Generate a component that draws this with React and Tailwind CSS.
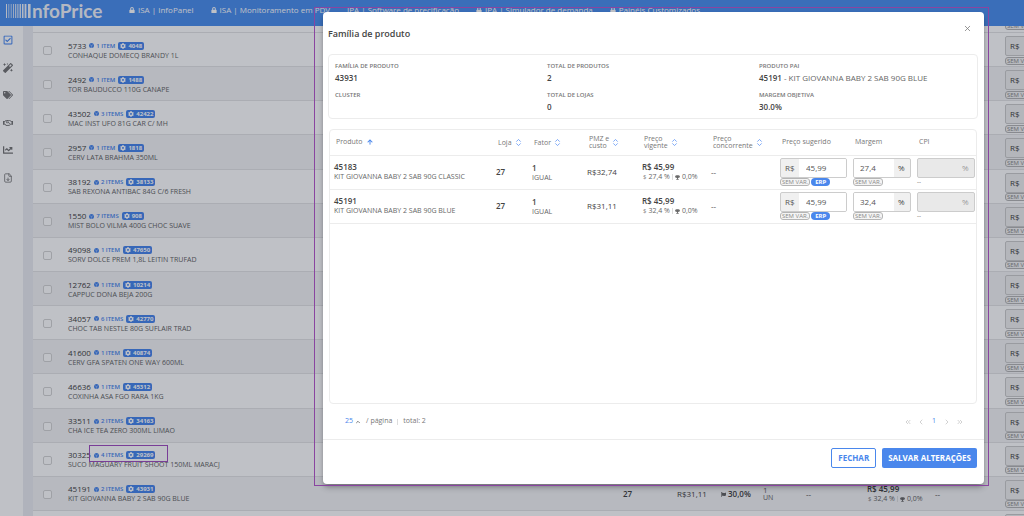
import { ChevronLeft, ChevronRight, ChevronsLeft, ChevronsRight, ChevronUp, FileDown, X } from 'lucide-react';
import {
    FaArrowUp,
    FaChartLine,
    FaCog,
    FaFlag,
    FaLock,
    FaMagic,
    FaRegCheckSquare,
    FaRegHandshake,
    FaTags,
    FaTrophy,
} from 'react-icons/fa';

const navItems = [
    { label: 'ISA | InfoPanel', locked: true },
    { label: 'ISA | Monitoramento em PDV', locked: true },
    { label: 'IPA | Software de precificação', locked: false },
    { label: 'IPA | Simulador de demanda', locked: true },
    { label: 'Painéis Customizados', locked: true },
];

const menuItems = [
    { label: 'Aprovação', icon: FaRegCheckSquare, active: true },
    { label: 'Regras', icon: FaMagic },
    { label: 'Etiquetas', icon: FaTags },
    { label: 'Negociações', icon: FaRegHandshake },
    { label: 'Relatórios', icon: FaChartLine },
    { label: 'Exportações', icon: FileDown },
];

const products = [
    { id: '5733', name: 'CONHAQUE DOMECQ BRANDY 1L', items: '1 ITEM', family: '4048' },
    { id: '2492', name: 'TOR BAUDUCCO 110G CANAPE', items: '1 ITEM', family: '1488' },
    { id: '43502', name: 'MAC INST UFO 81G CAR C/ MH', items: '3 ITEMS', family: '42422' },
    { id: '2957', name: 'CERV LATA BRAHMA 350ML', items: '1 ITEM', family: '1818' },
    { id: '38192', name: 'SAB REXONA ANTIBAC 84G C/6 FRESH', items: '2 ITEMS', family: '38133' },
    { id: '1550', name: 'MIST BOLO VILMA 400G CHOC SUAVE', items: '7 ITEMS', family: '908' },
    { id: '49098', name: 'SORV DOLCE PREM 1,8L LEITIN TRUFAD', items: '1 ITEM', family: '47650' },
    { id: '12762', name: 'CAPPUC DONA BEJA 200G', items: '1 ITEM', family: '10214' },
    { id: '34057', name: 'CHOC TAB NESTLE 80G SUFLAIR TRAD', items: '6 ITEMS', family: '42770' },
    { id: '41600', name: 'CERV GFA SPATEN ONE WAY 600ML', items: '1 ITEM', family: '40874' },
    { id: '46636', name: 'COXINHA ASA FGO RARA 1KG', items: '1 ITEM', family: '45312' },
    { id: '33511', name: 'CHA ICE TEA ZERO 300ML LIMAO', items: '2 ITEMS', family: '34163' },
    { id: '30325', name: 'SUCO MAGUARY FRUIT SHOOT 150ML MARACJ', items: '4 ITEMS', family: '29269', marked: true },
    {
        id: '45191',
        name: 'KIT GIOVANNA BABY 2 SAB 90G BLUE',
        items: '2 ITEMS',
        family: '43931',
        store: '27',
        cost: 'R$31,11',
        target: '30,0%',
        price: 'R$ 45,99',
        margin: '32,4 %',
    },
];

const familyInfo = [
    { label: 'FAMÍLIA DE PRODUTO', value: '43931' },
    { label: 'TOTAL DE PRODUTOS', value: '2' },
    { label: 'PRODUTO PAI', value: '45191', detail: 'KIT GIOVANNA BABY 2 SAB 90G BLUE' },
    { label: 'CLUSTER', value: '' },
    { label: 'TOTAL DE LOJAS', value: '0' },
    { label: 'MARGEM OBJETIVA', value: '30.0%' },
];

const familyProducts = [
    { id: '45183', name: 'KIT GIOVANNA BABY 2 SAB 90G CLASSIC', cost: 'R$32,74', margin: '27,4 %', suggestedMargin: '27,4' },
    { id: '45191', name: 'KIT GIOVANNA BABY 2 SAB 90G BLUE', cost: 'R$31,11', margin: '32,4 %', suggestedMargin: '32,4' },
];

const Logo = () => (
    <a href="#" aria-label="InfoPrice" className="flex w-[98px] items-center gap-px pl-[6px] text-[#f0f3f9]">
        <svg viewBox="0 0 25 14" className="h-[14px] w-[25px] shrink-0" fill="currentColor" aria-hidden="true">
            <rect x="0" y="0" width="1" height="14" />
            <rect x="2.5" y="0" width="0.7" height="14" />
            <rect x="4.8" y="0" width="0.7" height="14" />
            <rect x="7" y="0" width="0.8" height="14" />
            <rect x="9.2" y="0" width="1" height="14" />
            <rect x="11.4" y="0" width="1" height="14" />
            <rect x="13.6" y="0" width="1.3" height="14" />
            <rect x="16" y="0" width="1.5" height="14" />
            <rect x="18.6" y="0" width="1.8" height="14" />
            <rect x="22" y="0" width="2.6" height="14" />
        </svg>
        <span className="font-['Lato',sans-serif] text-[19px] leading-[14px] font-bold">nfoPrice</span>
    </a>
);

const BallIcon = () => (
    <svg viewBox="0 0 10 10" className="size-[5px] shrink-0" aria-hidden="true">
        <circle cx="5" cy="5" r="5" fill="#4a87ec" />
        <path d="M5 5 V10 M5 5 L1 3 M5 5 L9 3" stroke="#cfdffa" strokeWidth="0.9" />
    </svg>
);

const SortIcon = () => (
    <svg viewBox="0 0 8 10" className="h-[9px] w-[7px] shrink-0" fill="none" stroke="#6b9df5" aria-hidden="true">
        <path d="M1.5 4 L4 1.5 L6.5 4 M1.5 6 L4 8.5 L6.5 6" />
    </svg>
);

const NoChange = () => (
    <span className="rounded-[3px] border border-[#b5b5b5] bg-[#f4f4f4] px-px text-[6px] leading-[6px] whitespace-nowrap text-[#8a8a8a]">
        SEM VAR.
    </span>
);

const PriceDetail = ({ price, margin }) => (
    <>
        <div className="text-[8px] leading-[10px] font-semibold">{price}</div>
        <div className="flex items-center gap-[2px] text-[7px] leading-[10px] whitespace-nowrap text-[#666]">
            <span className="pl-px text-[6px] text-[#888]">$</span>
            <span>{margin}</span>
            <span className="h-[6px] w-px bg-[#ddd]" />
            <FaTrophy className="size-[5px]" />
            <span>0,0%</span>
        </div>
    </>
);

const SuggestedCell = () => (
    <div className="w-[66px]">
        <div className="flex h-5 items-center rounded-[2px] border border-[#ccc] bg-[#f0f0f0] pl-1 text-[8px] font-medium text-[#444]">
            R$
        </div>
        <div className="flex h-[9px] items-center">
            <NoChange />
        </div>
    </div>
);

const ProductRow = ({ product }) => (
    <tr className="border-b border-[#e4e4e6] even:bg-[#f4f4f5] [&>td]:pt-[2px]">
        <td className="pl-[10px]">
            <input
                type="checkbox"
                aria-label={`Selecionar ${product.name}`}
                className="block size-[9px] appearance-none rounded-[2px] border border-[#d4d4d4] bg-white"
            />
        </td>
        <td className="whitespace-nowrap">
            <div className="relative flex items-center leading-[10px]">
                <span className="text-[8px] font-medium">{product.id}</span>
                <span className="ml-[3px] flex items-center gap-[2px] text-[6px] font-semibold text-[#4a87ec]">
                    <BallIcon />
                    {product.items}
                </span>
                <span className="ml-[3px] flex h-[8px] items-center gap-[2px] rounded-[2px] bg-[#4a87ec] px-[2px] text-[6px] font-bold text-white">
                    <FaCog className="size-[6px]" />
                    {product.family}
                </span>
                {product.marked && (
                    <span className="absolute -top-[5px] left-[21px] h-[17px] w-[79px] border border-[#a24fc0]" />
                )}
            </div>
            <div className="text-[7px] leading-[10px] text-[#666]">{product.name}</div>
        </td>
        <td className="text-[8px] font-semibold">{product.store}</td>
        <td className="text-[8px] font-medium">{product.cost}</td>
        <td>
            {product.target && (
                <span className="flex items-center gap-[2px] text-[8px] font-semibold">
                    <FaFlag className="size-[5px] text-[#666]" />
                    {product.target}
                </span>
            )}
        </td>
        <td className="text-[7px] leading-[8px] text-[#666]">
            {product.store && (
                <>
                    <div className="text-[8px] font-medium">1</div>
                    UN
                </>
            )}
        </td>
        <td className="text-[8px]">{product.store && '--'}</td>
        <td>{product.price && <PriceDetail price={product.price} margin={product.margin} />}</td>
        <td className="text-[8px]">{product.store && '--'}</td>
        <td>
            <SuggestedCell />
        </td>
    </tr>
);

const SortHeader = ({ children }) => (
    <th className="pl-[6px] text-left font-normal">
        <button type="button" className="flex items-center gap-[3px] text-left leading-[7px]">
            <span>{children}</span>
            <SortIcon />
        </button>
    </th>
);

const FamilyRow = ({ product }) => (
    <tr className="h-[34px] border-b border-[#ececec]">
        <td className="pl-1 whitespace-nowrap">
            <div className="text-[8px] leading-[10px] font-semibold">{product.id}</div>
            <div className="text-[7px] leading-[10px] text-[#666]">{product.name}</div>
        </td>
        <td className="pl-1 text-[8px] font-semibold">27</td>
        <td className="pl-1">
            <div className="text-[8px] leading-[10px] font-semibold">1</div>
            <div className="text-[7px] leading-[9px] text-[#666]">IGUAL</div>
        </td>
        <td className="pl-1 text-[8px] font-medium">{product.cost}</td>
        <td className="pl-1">
            <PriceDetail price="R$ 45,99" margin={product.margin} />
        </td>
        <td className="pl-1 text-[8px]">--</td>
        <td className="pl-1">
            <label className="flex h-5 w-[67px] items-center overflow-hidden rounded-[2px] border border-[#ccc] bg-[#f0f0f0]">
                <span className="w-[18px] shrink-0 pl-1 text-[8px] font-medium text-[#555]">R$</span>
                <input
                    aria-label={`Preço sugerido ${product.id}`}
                    defaultValue="45,99"
                    className="h-full w-full min-w-0 bg-white pl-[7px] text-[8px] text-[#555]"
                />
            </label>
            <div className="flex h-[9px] items-center gap-px">
                <NoChange />
                <span className="rounded-full bg-[#4a87ec] px-1 text-[6px] leading-[8px] font-bold text-white">ERP</span>
            </div>
        </td>
        <td className="pl-1">
            <label className="flex h-5 w-[58px] items-center overflow-hidden rounded-[2px] border border-[#ccc] bg-[#f0f0f0]">
                <input
                    aria-label={`Margem ${product.id}`}
                    defaultValue={product.suggestedMargin}
                    className="h-full w-full min-w-0 bg-white pl-[6px] text-[8px] text-[#555]"
                />
                <span className="w-[16px] shrink-0 pl-1 text-[8px] text-[#444]">%</span>
            </label>
            <div className="flex h-[9px] items-center">
                <NoChange />
            </div>
        </td>
        <td className="pl-1">
            <label className="flex h-5 w-[58px] items-center rounded-[2px] border border-[#ccc] bg-[#e9e9e9]">
                <input aria-label={`CPI ${product.id}`} disabled className="h-full w-full min-w-0" />
                <span className="w-[12px] shrink-0 text-[8px] text-[#999]">%</span>
            </label>
            <div className="h-[9px] text-[6px] leading-[9px]">--</div>
        </td>
    </tr>
);

const FamilyModal = () => (
    <div
        role="dialog"
        aria-label="Família de produto"
        className="relative flex w-full flex-col rounded-[4px] bg-white shadow-md shadow-black/30"
    >
        <div className="pointer-events-none absolute -top-[5px] -right-[5px] -bottom-[2px] -left-[9px] border border-[#8a45a0]" />
        <header className="flex h-[42px] justify-between pr-3 pl-[5px]">
            <h2 className="pt-4 text-[9px] leading-3 font-semibold text-[#444]">Família de produto</h2>
            <button type="button" aria-label="Fechar janela" className="mt-3 h-[9px]">
                <X className="size-[9px] text-[#777]" />
            </button>
        </header>

        <section className="mr-[6px] ml-[5px] grid h-[65px] grid-cols-3 content-start gap-y-[7px] rounded-[4px] border border-[#ececec] px-[6px] pt-[6px]">
            {familyInfo.map((info) => (
                <div key={info.label}>
                    <div className="text-[6px] leading-[11px] font-semibold text-[#777]">{info.label}</div>
                    <div className="text-[8px] leading-[11px] font-semibold whitespace-nowrap">
                        {info.value}
                        {info.detail && <span className="font-medium text-[#666]"> - {info.detail}</span>}
                    </div>
                </div>
            ))}
        </section>

        <section className="mt-[10px] mr-[7px] ml-[6px] flex-1 rounded-[4px] border border-[#ececec]">
            <table className="w-full table-fixed">
                <colgroup>
                    <col />
                    <col className="w-[36px]" />
                    <col className="w-[55px]" />
                    <col className="w-[55px]" />
                    <col className="w-[69px]" />
                    <col className="w-[69px]" />
                    <col className="w-[73px]" />
                    <col className="w-[64px]" />
                    <col className="w-[63px]" />
                </colgroup>
                <thead>
                    <tr className="h-[25px] border-b border-[#ececec] text-[7px] text-[#777]">
                        <th className="pl-[6px] text-left font-normal">
                            <button type="button" className="flex items-center gap-1">
                                Produto
                                <FaArrowUp className="size-[6px] text-[#4a87ec]" />
                            </button>
                        </th>
                        <SortHeader>Loja</SortHeader>
                        <SortHeader>Fator</SortHeader>
                        <SortHeader>PMZ e<br />custo</SortHeader>
                        <SortHeader>Preço<br />vigente</SortHeader>
                        <SortHeader>Preço<br />concorrente</SortHeader>
                        <th className="pl-[6px] text-left font-normal">Preço sugerido</th>
                        <th className="pl-[6px] text-left font-normal">Margem</th>
                        <th className="pl-[6px] text-left font-normal">CPI</th>
                    </tr>
                </thead>
                <tbody>
                    {familyProducts.map((product) => (
                        <FamilyRow key={product.id} product={product} />
                    ))}
                </tbody>
            </table>
        </section>

        <div className="flex h-[36px] items-center justify-between border-b border-[#ececec] pr-[20px] pl-[22px] text-[7px] text-[#777]">
            <div className="flex items-center">
                <button type="button" className="flex items-center gap-[2px] text-[#4a87ec]">
                    25
                    <ChevronUp className="size-[6px] text-[#555]" strokeWidth={3} />
                </button>
                <span className="ml-[5px]">/ página</span>
                <span className="mx-[5px] h-[6px] w-px bg-[#ddd]" />
                <span>total: 2</span>
            </div>
            <nav aria-label="Paginação" className="flex items-center gap-[5px] text-[#bbb]">
                <button type="button" aria-label="Primeira página"><ChevronsLeft className="size-[8px]" /></button>
                <button type="button" aria-label="Página anterior"><ChevronLeft className="size-[8px]" /></button>
                <button type="button" className="px-[2px] text-[#4a87ec]">1</button>
                <button type="button" aria-label="Próxima página"><ChevronRight className="size-[8px]" /></button>
                <button type="button" aria-label="Última página"><ChevronsRight className="size-[8px]" /></button>
            </nav>
        </div>

        <footer className="flex h-[44px] items-start justify-end gap-[6px] pt-2 pr-[7px] text-[8px] font-bold">
            <button type="button" className="h-5 rounded-[2px] border border-[#4a87ec] px-[6px] text-[#4a87ec]">
                FECHAR
            </button>
            <button type="button" className="h-5 rounded-[2px] bg-[#4a87ec] px-[6px] text-white">
                SALVAR ALTERAÇÕES
            </button>
        </footer>
    </div>
);

const App = () => (
    <div className="relative flex h-screen flex-col overflow-hidden bg-white font-['Open_Sans','Noto_Sans',sans-serif] text-[#444]">
        <header className="flex h-[26px] shrink-0 items-start bg-[#4d90ee] pt-1">
            <Logo />
            <nav className="flex gap-[17px] pl-[31px] text-[8px] leading-[12px] whitespace-nowrap text-white">
                {navItems.map((item) => (
                    <a key={item.label} href="#" className="flex items-center gap-[3px]">
                        {item.locked && <FaLock className="size-[6px]" />}
                        {item.label}
                    </a>
                ))}
            </nav>
        </header>

        <div className="flex min-h-0 flex-1">
            <aside className="w-[23px] shrink-0 pt-[9px] pl-[3px]">
                <ul className="flex h-[148px] flex-col justify-between">
                    {menuItems.map(({ label, icon: Icon, active }) => (
                        <li key={label}>
                            <a href="#" aria-label={label} className={active ? 'text-[#3d80f0]' : 'text-[#777]'}>
                                <Icon className="size-[10px]" />
                            </a>
                        </li>
                    ))}
                </ul>
            </aside>

            <main className="flex min-w-0 flex-1 flex-col overflow-hidden border-l-[10px] border-[#ebecf1]">
                <div className="flex h-[7px] w-[1040px] shrink-0 items-end border-b border-[#e4e4e6] pb-[2px] pl-[972px]">
                    <NoChange />
                </div>
                <div className="min-h-0 flex-1">
                    <table className="h-full w-[1040px] table-fixed">
                        <colgroup>
                            <col className="w-[35px]" />
                            <col className="w-[555px]" />
                            <col className="w-[54px]" />
                            <col className="w-[44px]" />
                            <col className="w-[42px]" />
                            <col className="w-[43px]" />
                            <col className="w-[61px]" />
                            <col className="w-[68px]" />
                            <col className="w-[70px]" />
                            <col />
                        </colgroup>
                        <tbody>
                            {products.map((product) => (
                                <ProductRow key={product.id} product={product} />
                            ))}
                        </tbody>
                    </table>
                </div>
                <div className="h-[5px] w-[1040px] shrink-0 overflow-hidden pt-[3px] pl-[972px]">
                    <SuggestedCell />
                </div>
            </main>
        </div>

        <div className="absolute inset-0 flex bg-[#00081a]/25 pt-3 pr-10 pb-8 pl-[323px]">
            <FamilyModal />
        </div>
    </div>
);

export default App;
